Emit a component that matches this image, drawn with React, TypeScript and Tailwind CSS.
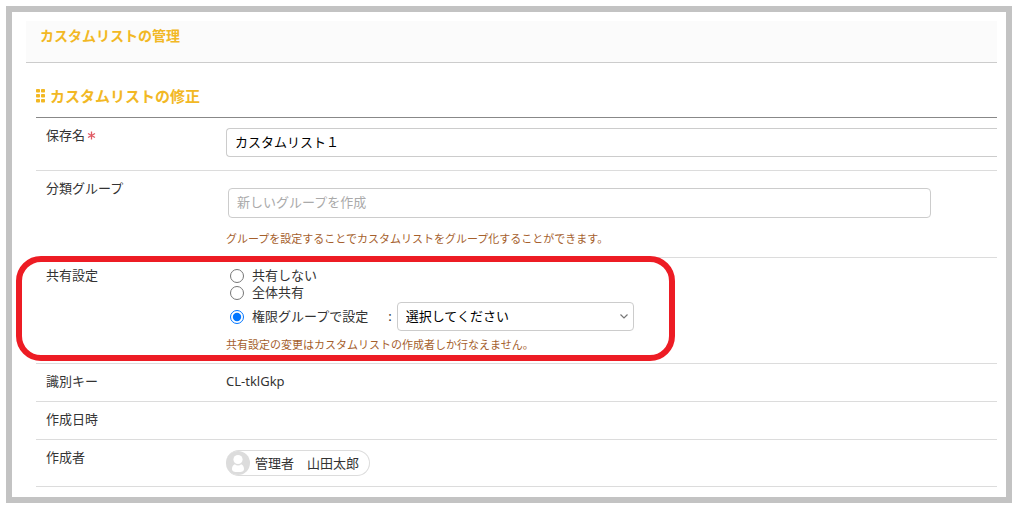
import type { ReactNode } from "react";

function GripIcon() {
  return (
    <svg width="10" height="14" viewBox="0 0 10 14" fill="#f2b824" aria-hidden="true">
      {[0, 5, 10].map((y) => (
        <g key={y}>
          <rect x="0" y={y} width="4" height="3.600" rx="0.8" />
          <rect x="5" y={y} width="4" height="3.600" rx="0.8" />
        </g>
      ))}
    </svg>
  );
}

function RequiredMark() {
  return (
    <svg width="9" height="9" viewBox="0 0 9 9" stroke="#e05a64" strokeWidth="1.3" role="img" aria-label="必須">
      <path d="M4.5 0.500v8M1 2.500l7 4M1 6.500l7-4" />
    </svg>
  );
}

function Avatar() {
  return (
    <svg width="24" height="24" viewBox="0 0 24 24" aria-hidden="true">
      <circle cx="12" cy="12" r="12" fill="#dcdcdc" />
      <circle cx="12" cy="8.500" r="4.600" fill="#fff" />
      <path
        d="M8.800 13.300c1 .8 2 1.200 3.200 1.200s2.200-.4 3.200-1.200c1.800.7 2.800 2.500 2.800 4.700 0 2.300-2.200 3.100-6 3.100s-6-.8-6-3.100c0-2.200 1-4 2.800-4.700z"
        fill="#fff"
      />
    </svg>
  );
}

type RowProps = {
  label: ReactNode;
  htmlFor?: string;
  children?: ReactNode;
};

function Row({ label, htmlFor, children }: RowProps) {
  return (
    <div className="relative flex border-b border-[#dcdcdc]">
      <div className="w-[190px] shrink-0 pt-[9px] pb-[11px] pl-[10px]">
        {htmlFor ? (
          <label htmlFor={htmlFor} className="flex items-center gap-[2px]">
            {label}
          </label>
        ) : (
          <span>{label}</span>
        )}
      </div>
      <div className="min-w-0 flex-1">{children}</div>
    </div>
  );
}

export default function App() {
  return (
    <main className="mt-[6px] mr-[14px] mb-[13px] ml-[6px] border-6 border-[#c3c3c3] bg-white pt-[9px] pr-[9px] pb-[10px] pl-[14px] font-['Noto_Sans','Noto_Sans_CJK_JP',sans-serif] text-[13px] leading-[17px] text-[#333]">
      <header className="border-b border-[#ccc] bg-[#fbfbfb] pt-[5px] pb-4 pl-[14px]">
        <h1 className="text-[14px] leading-5 font-bold text-[#f2b824]">カスタムリストの管理</h1>
      </header>

      <form className="pt-[23px] pl-[10px]">
        <h2 className="flex items-center gap-1 border-b border-[#888] pb-[11px] text-[15px] leading-5 font-bold text-[#f2b824]">
          <GripIcon />
          カスタムリストの修正
        </h2>

        <Row
          htmlFor="list-name"
          label={
            <>
              保存名
              <RequiredMark />
            </>
          }
        >
          <input
            id="list-name"
            type="text"
            defaultValue="カスタムリスト１"
            className="mt-[10px] mb-[13px] block h-[29px] w-full rounded-l border border-r-0 border-[#ccc] px-2 pb-[2px] text-black"
          />
        </Row>

        <Row htmlFor="group-name" label="分類グループ">
          <div className="pt-[17px] pr-[68px] pb-[10px] pl-[2px]">
            <input
              id="group-name"
              type="text"
              placeholder="新しいグループを作成"
              className="block h-[30px] w-[calc(100%+2px)] rounded border border-[#ccc] px-2 pb-[2px] text-black placeholder:text-[#aaa]"
            />
            <p className="-ml-[2px] mt-[13px] text-[11px] leading-4 text-[#a5602c]">
              グループを設定することでカスタムリストをグループ化することができます。
            </p>
          </div>
        </Row>

        <Row label="共有設定">
          <div role="radiogroup" aria-label="共有設定" className="pt-[9px] pb-[6px] pl-1">
            <label className="flex w-fit items-center gap-2">
              <input type="radio" name="share" className="size-[14px]" />
              共有しない
            </label>
            <label className="flex w-fit items-center gap-2">
              <input type="radio" name="share" className="size-[14px]" />
              全体共有
            </label>
            <div className="flex items-center pt-px">
              <label className="flex items-center gap-2">
                <input type="radio" name="share" defaultChecked className="size-[14px]" />
                権限グループで設定
              </label>
              <span className="ml-5">:</span>
              <div className="relative ml-[5px]">
                <select
                  aria-label="権限グループ"
                  className="block h-[29px] w-[237px] appearance-none rounded border border-[#ccc] bg-white px-2 text-black"
                >
                  <option>選択してください</option>
                </select>
                <svg
                  className="pointer-events-none absolute top-[11px] right-[5px]"
                  width="10"
                  height="7"
                  viewBox="0 0 10 7"
                  fill="none"
                  stroke="#777"
                  strokeWidth="1.2"
                  aria-hidden="true"
                >
                  <path d="M1.500 1.500l3.500 3.500 3.500-3.500" />
                </svg>
              </div>
            </div>
          </div>
          <p className="pb-[10px] text-[11px] leading-4 text-[#a5602c]">
            共有設定の変更はカスタムリストの作成者しか行なえません。
          </p>
          {/* highlight frame around the sharing row */}
          <div className="pointer-events-none absolute -top-[2px] bottom-[2px] -left-5 w-[659px] rounded-[25px] border-6 border-[#ed1c24]" />
        </Row>

        <Row label="識別キー">
          <p className="pt-[9px]">CL-tklGkp</p>
        </Row>

        <Row label="作成日時" />

        <Row label="作成者">
          <div className="mt-[10px] mb-[10px] flex h-[26px] w-fit items-center gap-[5px] rounded-full border border-l-0 border-[#dcdcdc] pr-[10px]">
            <Avatar />
            <span>管理者　山田太郎</span>
          </div>
        </Row>
      </form>
    </main>
  );
}
